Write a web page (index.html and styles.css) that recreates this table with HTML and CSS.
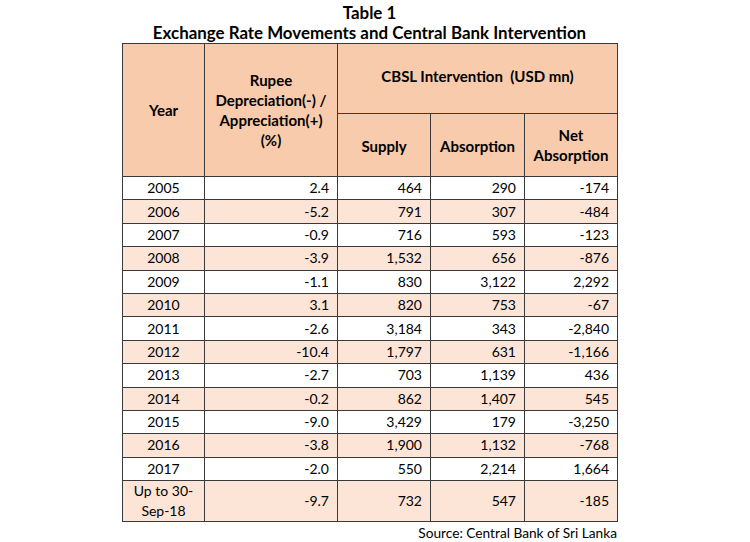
FILE: index.html
```html
<!DOCTYPE html>
<html>
<head>
<meta charset="utf-8">
<link rel="stylesheet" href="styles.css">
</head>
<body>
<div class="wrap">
  <div class="title">Table 1</div>
  <div class="title sub">Exchange Rate Movements and Central Bank Intervention</div>
  <table class="tbl">
    <colgroup>
      <col class="c1"><col class="c2"><col class="c3"><col class="c4"><col class="c5">
    </colgroup>
    <thead>
      <tr class="h1">
        <th rowspan="2">Year</th>
        <th rowspan="2">Rupee<br>Depreciation(-) /<br>Appreciation(+)<br>(%)</th>
        <th colspan="3">CBSL Intervention&nbsp; (USD mn)</th>
      </tr>
      <tr class="h2">
        <th class="low">Supply</th>
        <th class="low">Absorption</th>
        <th>Net<br>Absorption</th>
      </tr>
    </thead>
    <tbody>
      <tr><td>2005</td><td>2.4</td><td>464</td><td>290</td><td>-174</td></tr>
      <tr class="alt"><td>2006</td><td>-5.2</td><td>791</td><td>307</td><td>-484</td></tr>
      <tr><td>2007</td><td>-0.9</td><td>716</td><td>593</td><td>-123</td></tr>
      <tr class="alt"><td>2008</td><td>-3.9</td><td>1,532</td><td>656</td><td>-876</td></tr>
      <tr><td>2009</td><td>-1.1</td><td>830</td><td>3,122</td><td>2,292</td></tr>
      <tr class="alt"><td>2010</td><td>3.1</td><td>820</td><td>753</td><td>-67</td></tr>
      <tr><td>2011</td><td>-2.6</td><td>3,184</td><td>343</td><td>-2,840</td></tr>
      <tr class="alt"><td>2012</td><td>-10.4</td><td>1,797</td><td>631</td><td>-1,166</td></tr>
      <tr><td>2013</td><td>-2.7</td><td>703</td><td>1,139</td><td>436</td></tr>
      <tr class="alt"><td>2014</td><td>-0.2</td><td>862</td><td>1,407</td><td>545</td></tr>
      <tr><td>2015</td><td>-9.0</td><td>3,429</td><td>179</td><td>-3,250</td></tr>
      <tr class="alt"><td>2016</td><td>-3.8</td><td>1,900</td><td>1,132</td><td>-768</td></tr>
      <tr><td>2017</td><td>-2.0</td><td>550</td><td>2,214</td><td>1,664</td></tr>
      <tr class="alt last"><td>Up to 30-<br>Sep-18</td><td>-9.7</td><td>732</td><td>547</td><td>-185</td></tr>
    </tbody>
  </table>
  <div class="source">Source: Central Bank of Sri Lanka</div>
</div>
</body>
</html>
```
FILE: styles.css
```css
html, body {
  margin: 0;
  padding: 0;
  background: #ffffff;
}
body {
  font-family: Lato, "Open Sans", sans-serif;
  color: #000000;
}
.wrap {
  width: 495px;
  margin-left: 122px;
  padding-top: 2.5px;
}
.title {
  text-align: center;
  font-weight: bold;
  font-size: 16.9px;
  line-height: 20px;
}
.sub {
  margin-bottom: 0;
}
.tbl {
  width: 495px;
  border-collapse: collapse;
  table-layout: fixed;
  font-size: 14px;
}
.c1 { width: 82px; }
.c2 { width: 133px; }
.c3 { width: 93px; }
.c4 { width: 94px; }
.c5 { width: 93px; }
.tbl th, .tbl td {
  border: 1px solid #3a3a3a;
  padding: 0 8px;
}
.tbl th {
  background: #f8cbad;
  font-weight: bold;
  font-size: 15px;
  text-align: center;
  line-height: 20px;
  padding: 0 2px;
}
.h1 th { height: 65.5px; }
.h2 th { height: 60px; }
.h1 th[colspan] { padding-bottom: 4px; }
.h2 th.low { padding-top: 2px; }
.tbl td {
  height: 22.4px;
  text-align: right;
  line-height: 20px;
}
.tbl td:first-child {
  text-align: center;
}
.tbl tr.alt td {
  background: #fce4d6;
}
.tbl tr.last td {
  height: 40px;
}
.source {
  text-align: right;
  font-size: 13.7px;
  line-height: 16px;
  padding-top: 3px;
}
```
